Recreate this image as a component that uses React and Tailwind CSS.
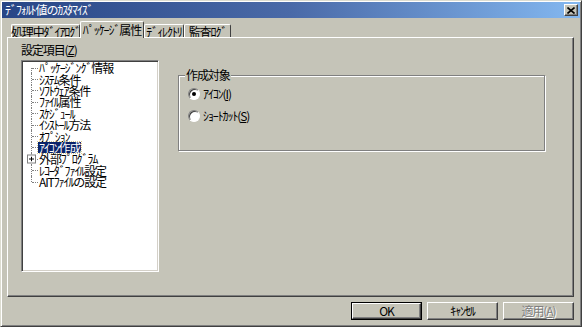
import React from 'react';

const treeItems = [
  'ﾊﾟｯｹｰｼﾞﾝｸﾞ情報',
  'ｼｽﾃﾑ条件',
  'ｿﾌﾄｳｪｱ条件',
  'ﾌｧｲﾙ属性',
  'ｽｹｼﾞｭｰﾙ',
  'ｲﾝｽﾄｰﾙ方法',
  'ｵﾌﾟｼｮﾝ',
  'ｱｲｺﾝ作成',
  '外部ﾌﾟﾛｸﾞﾗﾑ',
  'ﾚｺｰﾀﾞﾌｧｲﾙ設定',
  'AITﾌｧｲﾙの設定',
];

const raised =
  'border border-t-white border-l-white border-r-[#404040] border-b-[#404040] shadow-[inset_-1px_-1px_0_#808080]';

function Tab({ label, active, width }) {
  if (active) {
    return (
      <div
        className={`relative z-10 -mb-px h-[17px] ${width} bg-[#c5c4b8] border-t border-l border-r border-t-white border-l-white border-r-[#404040] rounded-t-[2px] flex items-start justify-center pt-[2px] whitespace-nowrap text-black`}
      >
        {label}
      </div>
    );
  }
  return (
    <div
      className={`h-[13px] ${width} bg-[#c5c4b8] border-t border-l border-r border-t-white border-l-white border-r-[#404040] rounded-t-[2px] flex items-start justify-center pt-[1px] whitespace-nowrap text-black`}
    >
      {label}
    </div>
  );
}

function TreeRow({ label, index, total }) {
  const first = index === 0;
  const last = index === total - 1;
  const selected = label === 'ｱｲｺﾝ作成';
  const expandable = label === '外部ﾌﾟﾛｸﾞﾗﾑ';
  return (
    <div className="flex h-[11.4px] items-center">
      <div className="relative w-[15px] h-full shrink-0">
        <div
          className={`absolute left-[8px] border-l border-dotted border-[#808080] ${first ? 'top-1/2' : 'top-0'} ${last ? 'bottom-1/2' : 'bottom-0'}`}
        />
        <div className="absolute left-[9px] right-0 top-1/2 border-t border-dotted border-[#808080]" />
        {expandable && (
          <div className="absolute left-[4px] top-1/2 -translate-y-1/2 w-[9px] h-[9px] bg-white border border-[#808080] flex items-center justify-center">
            <svg width="5" height="5" viewBox="0 0 5 5">
              <path d="M0 2.5h5M2.5 0v5" stroke="#000" strokeWidth="1" />
            </svg>
          </div>
        )}
      </div>
      <span
        className={`h-[11px] leading-[11px] px-[1px] whitespace-nowrap ${
          selected ? 'bg-[#0a246a] text-white outline outline-1 outline-dotted outline-[#d8c890]' : 'text-black'
        }`}
      >
        {label}
      </span>
    </div>
  );
}

function Radio({ checked, children }) {
  return (
    <div className="flex items-center gap-[3px] h-[14px]">
      <div className="w-[12px] h-[12px] rounded-full bg-white border border-[#808080] border-r-white border-b-white shadow-[inset_1px_1px_0_#404040] flex items-center justify-center">
        {checked && <div className="w-[4px] h-[4px] rounded-full bg-black" />}
      </div>
      <span className="text-black leading-[12px] whitespace-nowrap">{children}</span>
    </div>
  );
}

function Button({ children, isDefault, disabled }) {
  return (
    <div className={`w-[71px] h-[18px] ${isDefault ? 'border border-black' : ''}`}>
      <div
        className={`w-full h-full ${raised} flex items-center justify-center whitespace-nowrap ${
          disabled ? 'text-[#808080] [text-shadow:1px_1px_0_#fff]' : 'text-black'
        }`}
      >
        {children}
      </div>
    </div>
  );
}

export default function App() {
  return (
    <div className="w-[582px] h-[327px] bg-[#c5c4b8] border border-t-[#dcdcd0] border-l-[#dcdcd0] border-r-[#404040] border-b-[#404040] shadow-[inset_1px_1px_0_#fff,inset_-1px_-1px_0_#808080] font-['Noto_Sans_CJK_JP',sans-serif] text-[12px] tracking-[-1.1px] leading-none overflow-hidden">
      <div className="px-[1px] pt-[1px] flex flex-col">
        {/* title bar */}
        <div className="h-[16px] bg-linear-to-r from-[#284686] via-[#4a6aa8] to-[#84b8f0] flex items-center justify-between pl-[3px] pr-[2px]">
          <span className="text-white leading-none whitespace-nowrap">ﾃﾞﾌｫﾙﾄ値のｶｽﾀﾏｲｽﾞ</span>
          <div className={`w-[14px] h-[12px] bg-[#c5c4b8] ${raised} flex items-center justify-center`}>
            <svg width="8" height="7" viewBox="0 0 8 7">
              <path d="M0.5 0.5L7.5 6.5M7.5 0.5L0.5 6.5" stroke="#000" strokeWidth="1.6" />
            </svg>
          </div>
        </div>

        {/* tabs */}
        <div className="mt-[3px] h-[16px] ml-[9px] flex items-end">
          <Tab label="処理中ﾀﾞｲｱﾛｸﾞ" width="w-[69px]" />
          <Tab label="ﾊﾟｯｹｰｼﾞ属性" width="w-[64px]" active />
          <Tab label="ﾃﾞｨﾚｸﾄﾘ" width="w-[40px]" />
          <Tab label="監査ﾛｸﾞ" width="w-[47px]" />
        </div>

        {/* tab page */}
        <div className="ml-[5px] w-[567px] h-[260px] border border-t-white border-l-white border-r-[#404040] border-b-[#404040] shadow-[inset_-1px_-1px_0_#808080] flex">
          <div className="ml-[13px] pt-[6px] flex flex-col">
            <div className="h-[12px] leading-[12px] text-black whitespace-nowrap">
              設定項目(<span className="underline">Z</span>)
            </div>
            <div className="mt-[4px] w-[138px] h-[212px] bg-white border border-[#808080] border-r-white border-b-white shadow-[inset_1px_1px_0_#404040,inset_-1px_-1px_0_#d4d0c8] pt-[1px] pl-[1px]">
              {treeItems.map((item, i) => (
                <TreeRow key={item} label={item} index={i} total={treeItems.length} />
              ))}
            </div>
          </div>

          <div className="ml-[19px] mt-[37px]">
            <div className="relative w-[367px] h-[76px] border border-[#808080] shadow-[inset_1px_1px_0_#fff,1px_1px_0_#fff] pl-[9px] pt-[11px] flex flex-col gap-[8px]">
              <span className="absolute left-[6px] top-[-7px] px-[1px] bg-[#c5c4b8] text-black leading-[12px] whitespace-nowrap">作成対象</span>
              <Radio checked>
                ｱｲｺﾝ(<span className="underline">I</span>)
              </Radio>
              <Radio>
                ｼｮｰﾄｶｯﾄ(<span className="underline">S</span>)
              </Radio>
            </div>
          </div>
        </div>

        {/* buttons */}
        <div className="mt-[5px] flex justify-end gap-[5px] pr-[6px]">
          <Button isDefault>OK</Button>
          <Button>ｷｬﾝｾﾙ</Button>
          <Button disabled>
            適用(<span className="underline">A</span>)
          </Button>
        </div>
      </div>
    </div>
  );
}
